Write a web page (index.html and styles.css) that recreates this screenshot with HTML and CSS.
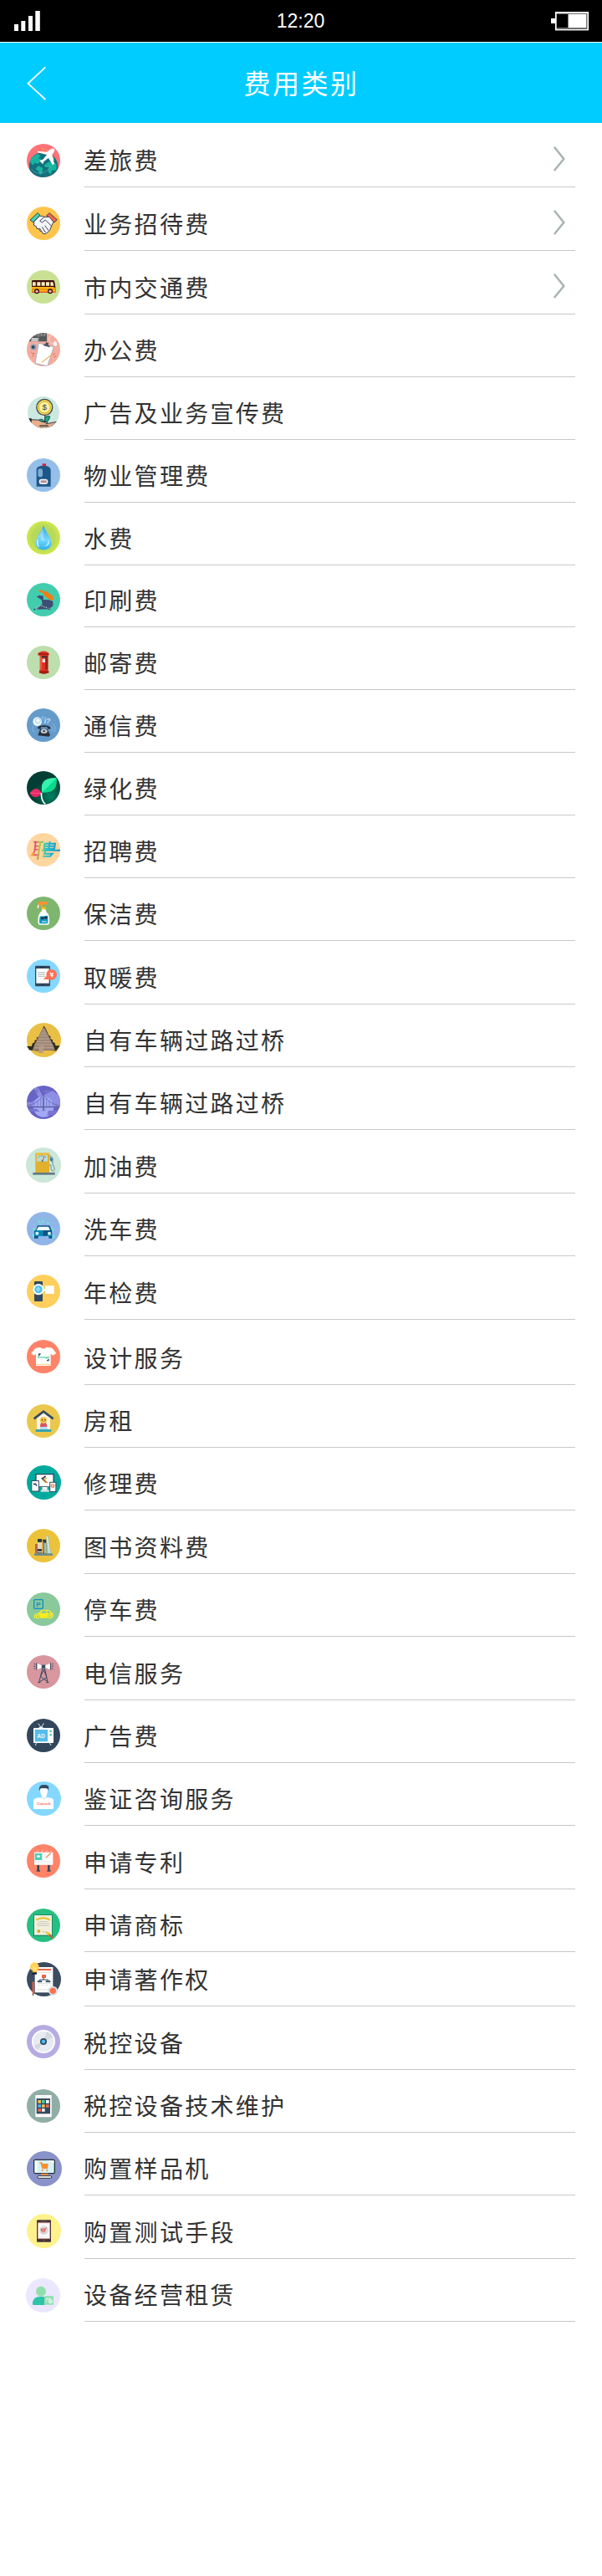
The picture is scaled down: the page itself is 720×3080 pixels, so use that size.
FILE: index.html
```html
<!DOCTYPE html>
<html lang="zh-CN">
<head>
<meta charset="utf-8">
<title>费用类别</title>
<link rel="stylesheet" href="styles.css">
</head>
<body>
<div class="status">
  <svg class="signal" width="32" height="26" viewBox="0 0 32 26"><path fill="#fff" d="M0 17h5v8H0zM8.300 13h5v12h-5zM17 7h5v18h-5zM25.300 1h5.500v24h-5.500z"/></svg>
  <span class="time">12:20</span>
  <svg class="battery" width="46" height="23" viewBox="0 0 46 23"><path fill="#fff" d="M0 8h5v6H0z"/><rect x="5.800" y="1" width="38.400" height="20.500" fill="#000" stroke="#fff" stroke-width="1.800"/><path stroke="#777" d="M7 19.500h36M42.500 2v18M7 2.500h36"/><path fill="#fff" d="M20.500 3H42v16H20.500z"/></svg>
</div>
<header class="header">
  <svg class="back" width="24" height="42" viewBox="0 0 24 42"><path d="M22.300 1.300 1.500 20.800 22.300 40" fill="none" stroke="#fff" stroke-width="1.800"/></svg>
  <h1 class="title">费用类别</h1>
</header>
<ul class="list">
<li class="row h77 b11"><svg class="icon" viewBox="0 0 120 120"><circle cx="60" cy="60" r="60" fill="#ff7378"/><path fill="#13717f" d="M10 92C2 60 26 30 60 31s57 29 51 60c-23 39-80 38-101 1z"/><path fill="#17b5a0" d="M18 49l22-14 10 8-9 9 12 5-13 15-11-4-8 9-9-13zM42 78l15 9-2 17-8 7-4-13-12-8zM63 75l20-12 23 8 1 23-17 1-4 15-10-12 4-14-15-1zM71 48l14-7 16 16-14 5z"/><path fill="none" stroke="#8fd5d0" stroke-width="2" stroke-dasharray="4 3" d="M17 92q40 36 79-25"/><path fill="#f7bd35" d="M54 18l7-1-2 8zM68 23l5-2 1 6zM91 49l7-2-4 8zM87 61l7-2-3 8z"/><path fill="#fff" d="M98 17c5 4-1 15-7 21l8 33-6 5-15-26-17 14-3 9-5-5-7-7 3-2 9-3 14-17-33-8 1-5 33 3c8-9 19-15 25-12z"/></svg><span class="label">差旅费</span><svg class="arrow" viewBox="0 0 14 30"><path d="M1.500 1.500 12.300 15 1.500 28.300"/></svg></li>
<li class="row h76"><svg class="icon" viewBox="0 0 120 120"><circle cx="60" cy="60" r="60" fill="#ffc44c"/><g stroke="#3a4353" stroke-width="3" stroke-linejoin="round"><path fill="#3dd6b2" d="M39 23l9 8-25 25-11-8z"/><path fill="#fa6244" d="M81 23l-10 9 28 25 10-10z"/><path fill="#f4f5f9" d="M26 54l20-20h9l8 3h18l15 18-8 16-5 14-8 7-8 6-9-1-4-8-6-1-4-8-8-1-2-8-9-4z"/><path fill="none" d="M64 37L47 51l8 6 12-9 23 23M65 68l13 18M55 73l13 21M45 77l7 9"/></g></svg><span class="label">业务招待费</span><svg class="arrow" viewBox="0 0 14 30"><path d="M1.500 1.500 12.300 15 1.500 28.300"/></svg></li>
<li class="row h76"><svg class="icon" viewBox="0 0 120 120"><circle cx="60" cy="60" r="60" fill="#cae194"/><path fill="#3b0a0c" d="M18 38q2-2 5-2h71q5 0 6 7l3 19v17H19z"/><path fill="#fbb610" d="M18 60h78l6 4v15H19z"/><path fill="#ec8b09" d="M18 67h82v4H18z"/><path fill="#e84a33" d="M18 77h85v4H18z"/><path fill="#fff2bf" d="M21 43h11v13H21zM37 43h12v13H37zM53 43h12v13H53zM69 43h12v13H69zM85 43h9l3 13H85z"/><circle cx="36" cy="76" r="9" fill="#2d1416"/><circle cx="84" cy="76" r="9" fill="#2d1416"/><circle cx="36" cy="76" r="5" fill="#ffb3a0"/><circle cx="84" cy="76" r="5" fill="#ffb3a0"/></svg><span class="label">市内交通费</span><svg class="arrow" viewBox="0 0 14 30"><path d="M1.500 1.500 12.300 15 1.500 28.300"/></svg></li>
<li class="row h75"><svg class="icon" viewBox="0 0 120 120"><clipPath id="office"><circle cx="60" cy="60" r="60"/></clipPath><g clip-path="url(#office)"><path fill="#f4ac9e" d="M0 0h120v120H0z"/><path fill="#55585a" d="M0 0h72v31H0z"/><path fill="#c5c5c5" d="M18 18h23v13H15z"/><path stroke="#a1a1a1" stroke-width="2" d="M12 4h56M14 10h54M42 0v31M53 0v12M65 0v12"/><path fill="none" stroke="#fadad4" stroke-width="3" d="M93 7q-22 9-10 25t22-2"/><path fill="#f9f7f8" d="M96 34l5-4 6 3 2 11-6 4-7-4z"/><circle cx="24" cy="51" r="11" fill="#8aa8bc"/><circle cx="23" cy="51" r="6" fill="#37475d"/><path fill="#fff" stroke="#87a0c1" stroke-width="2" d="M43 37l54 13-23 69-44-10z"/><path fill="#4c5260" d="M65 41l5-7 8 2-1 8 6 3-1 5-23-7 1-4z"/><path stroke="#f0ba6b" stroke-width="4" d="M54 106l34-27"/><path fill="none" stroke="#e1725f" stroke-width="3" d="M15 68l5 6 6-2-5 14M93 80l9-7M104 81l-5 8"/></g></svg><span class="label">办公费</span></li>
<li class="row h75 b13"><svg class="icon i38" viewBox="0 0 120 120"><clipPath id="grow"><circle cx="60" cy="60" r="60"/></clipPath><g clip-path="url(#grow)"><path fill="#cbe8e1" d="M0 0h120v120H0z"/><path fill="#e8ad8c" stroke="#293b43" stroke-width="3" d="M4 87l38 2 18 8h16l-7 7 43-9-25 20-24 7-58-12z"/><path fill="#1d2d36" d="M4 82l11 1v17H5z"/><path stroke="#1d2d36" stroke-width="4" fill="none" d="M45 111h33M62 98c8-6 3-19 4-28"/><path fill="#24a984" stroke="#194846" stroke-width="3" d="M43 89q13-8 20 5-12 5-20-5zM65 85q3-14 19-10-2 20-17 22z"/><circle cx="64" cy="41" r="30" fill="#fbdf59" stroke="#39454a" stroke-width="4"/><circle cx="64" cy="41" r="22" fill="#fff198" stroke="#c89e28" stroke-width="3"/></g><text x="64" y="52" text-anchor="middle" font-size="31" fill="#384248">$</text></svg><span class="label">广告及业务宣传费</span></li>
<li class="row h75"><svg class="icon" viewBox="0 0 120 120"><circle cx="60" cy="60" r="60" fill="#95bfe8"/><path fill="#1d5787" d="M35 101V39q1-9 16-12h19q15 3 16 15v59z"/><path fill="#d9213c" d="M56 19h13v9H56z"/><rect x="40" y="37" width="17" height="30" rx="8" fill="#7bacd7"/><rect x="44" y="74" width="32" height="19" rx="9" fill="#f5f3f6"/><path fill="#af909b" d="M50 79h21v9H50z"/></svg><span class="label">物业管理费</span></li>
<li class="row h75"><svg class="icon" viewBox="0 0 120 120"><defs><radialGradient id="lime"><stop offset=".65" stop-color="#b7d95b"/><stop offset="1" stop-color="#d0e84c"/></radialGradient><linearGradient id="drop" x2="0" y2="1"><stop offset="0" stop-color="#2fa5e2"/><stop offset=".6" stop-color="#74d6fb"/><stop offset="1" stop-color="#2bb0e9"/></linearGradient></defs><circle cx="60" cy="60" r="60" fill="url(#lime)"/><path fill="url(#drop)" d="M60 14c4 19 29 44 29 65 0 33-57 33-57 0 0-21 25-48 28-65z"/><path fill="#fff" opacity=".75" d="M38 62c-5 22 0 29 7 33-4-12-3-18-7-33zM77 65c1 17-6 23-16 25 15 1 24-8 16-25z"/><path fill="#effdff" opacity=".35" d="M57 25q-14 27-18 39l10-9q-1 17 14 16z"/></svg><span class="label">水费</span></li>
<li class="row h74"><svg class="icon" viewBox="0 0 120 120"><circle cx="60" cy="60" r="60" fill="#43cdae"/><path fill="#f47b13" d="M39 25l17 1 7 7 3-6 28 20 2 16-14-3-19-15-6-10-7-1z"/><path fill="#3e4d75" d="M35 49l11-5 14 3-1 13 22 1 13 5v16L80 94l-43 1 19-20-3-14z"/><path fill="none" stroke="#30405f" stroke-width="5" stroke-dasharray="5 3" d="M26 96l23-14 36 14"/><path fill="none" stroke="#bed7db" stroke-width="4" stroke-dasharray="4 4" d="M32 91l17-10 29 10"/></svg><span class="label">印刷费</span></li>
<li class="row h75"><svg class="icon" viewBox="0 0 120 120"><circle cx="60" cy="60" r="60" fill="#bddead"/><path fill="#de3321" d="M41 26q20-13 38 0v9h-3v50l3 12q-19 7-35 0l3-12V35h-6z"/><path fill="#a21d16" d="M41 28h38v5H41zM45 91h34v6q-18 8-34 0zM67 36h9v50h-9z"/><path fill="#35333d" d="M53 37h17v6H53z"/><path fill="#eee4df" d="M56 47h10v13H56z"/><path fill="#fb694d" d="M49 38h4v48h-4z"/></svg><span class="label">邮寄费</span></li>
<li class="row h75"><svg class="icon" viewBox="0 0 120 120"><circle cx="60" cy="60" r="60" fill="#659bcb"/><circle cx="38" cy="47" r="16" fill="#eef8ff"/><circle cx="40" cy="44" r="9" fill="none" stroke="#a0cce9" stroke-width="3"/><circle cx="58" cy="34" r="5" fill="none" stroke="#8dc6ec" stroke-width="3"/><text x="62" y="54" font-size="26" font-weight="bold" font-style="italic" fill="#c9e8fd">i?</text><path fill="none" stroke="#86b8df" stroke-width="3" d="M25 62q-10 12 3 25M94 54q15 15 3 31M88 62q9 11 2 20"/><path fill="#29313b" d="M39 73c-4-16 48-16 47 0l-10 1-3-7H51l-1 7zM48 74h26l10 22-5 5-39-4z"/><ellipse cx="62" cy="82" rx="12" ry="8" fill="#c9ced2"/><ellipse cx="62" cy="82" rx="5" ry="3" fill="#35414e"/></svg><span class="label">通信费</span></li>
<li class="row h75"><svg class="icon" viewBox="0 0 120 120"><defs><radialGradient id="forest" cx=".7" cy=".75"><stop stop-color="#008061"/><stop offset="1" stop-color="#033e34"/></radialGradient></defs><circle cx="60" cy="60" r="60" fill="url(#forest)"/><path fill="#08d98d" d="M107 25c3 29-4 54-52 52C48 38 66 23 107 25z"/><path fill="#34f3ac" d="M107 25L55 77C48 38 66 23 107 25z"/><path fill="#e92865" d="M11 79c15-21 31-21 42 0-13 20-31 19-42 0z"/><path stroke="#ff6893" stroke-width="2" d="M12 79h40"/><path fill="none" stroke="#fff" stroke-width="5" d="M52 78q0 30 15 40"/></svg><span class="label">绿化费</span></li>
<li class="row h75 b13"><svg class="icon" viewBox="0 0 120 120"><defs><linearGradient id="rainbow" gradientUnits="userSpaceOnUse" x1="20" x2="120"><stop stop-color="#ffa323"/><stop offset=".12" stop-color="#e0439c"/><stop offset=".25" stop-color="#bec933"/><stop offset=".5" stop-color="#25c4cf"/><stop offset="1" stop-color="#168bc9"/></linearGradient></defs><circle cx="60" cy="60" r="60" fill="#ffd5a0"/><path fill="none" stroke="url(#rainbow)" stroke-width="6" d="M24 32h36M32 34l-5 34-8 11h27M49 34L39 96M31 47h14M29 59h14M64 38h38l-3 18H62zM83 30l-4 26M63 47h38M54 62h66M68 62l-5 12h29l-8 9H57"/></svg><span class="label">招聘费</span></li>
<li class="row h75"><svg class="icon" viewBox="0 0 120 120"><circle cx="60" cy="60" r="60" fill="#7eb66f"/><path fill="#fb9330" d="M41 19l29-1q8 6 4 11l-16-1-2 15-5-1-1-13-8-1-1 10-6 1z"/><path fill="#fff" d="M40 29l4 1-2 12-4 1zM54 43h13q0 10 11 21 8 35-2 37H45q-8-3-3-32 4-13 12-17z"/><path fill="#fbbf1e" d="M54 38h14v8H54z"/><path fill="#0c99c4" d="M47 71l28-3q3 24-1 29H47q-4-3 0-26z"/><path fill="#28303d" d="M50 73l12 2 7-4 6 1-4 10-4-3-9 1-5 3z"/><path stroke="#e8faff" stroke-width="3" d="M54 90h17"/></svg><span class="label">保洁费</span></li>
<li class="row h76 b13"><svg class="icon" viewBox="0 0 120 120"><circle cx="60" cy="60" r="60" fill="#84d8ff"/><rect x="30" y="23" width="54" height="74" rx="4" fill="#34475e"/><path fill="#fff" d="M34 33h46v53H34z"/><path stroke="#233346" stroke-width="3" d="M48 28h18M52 91h9"/><path stroke="#98a2a9" stroke-width="4" stroke-dasharray="3 2" d="M42 47h23M42 54h23M42 61h25"/><path fill="#ff7057" d="M72 59l-13 12 20 2z"/><circle cx="89" cy="55" r="19" fill="#ff7057"/><path fill="none" stroke="#fff" stroke-width="4" d="M84 48l6 8 5-8M90 56v9M85 58h10"/></svg><span class="label">取暖费</span></li>
<li class="row h75 b11"><svg class="icon i41" viewBox="0 0 120 120"><circle cx="60" cy="60" r="60" fill="#e9bf45"/><path fill="#302c22" d="M60 10l7 11 10 22 7 6-2 6 9 5-1 6 8 4 3 10 15 0-13 18-28-2-38 2-28-3L0 81l17 1 3-10 8-4-1-6 9-4-2-6 8-4z"/><path fill="#9e8776" d="M57 17h5l31 62 6 17H20l7-20z"/><path stroke="#c8b3a0" stroke-width="2" d="M55 26h8M50 36h18M46 45h26M42 56h35M36 66h47M30 76h60M26 87h68"/><path fill="#b69a84" d="M44 80h18l-5 25H41z"/></svg><span class="label">自有车辆过路过桥</span></li>
<li class="row h75"><svg class="icon" viewBox="0 0 120 120"><clipPath id="bay"><circle cx="60" cy="60" r="60"/></clipPath><g clip-path="url(#bay)"><path fill="#6864c6" d="M0 0h120v120H0z"/><path fill="#8e8fe4" d="M0 59h20L42 41 21 0h15l20 35 38-16 12 10 14-3v52H0z"/><circle cx="60" cy="76" r="37" fill="#a2a8f5"/><path fill="#7875d2" d="M0 83h34l13 10H0zM78 90h42v16H73zM30 23l7-16 7 19zM57 18h38l-26 8z"/><path fill="none" stroke="#595a9f" stroke-width="2" d="M0 76h120M0 72Q40 66 60 33q20 32 60 40M60 31v58M54 89h13"/><path stroke="#5d5da0" stroke-width="4" d="M0 77h120M60 42v45"/><path stroke="#6a69b2" stroke-width="2" d="M15 69v7M27 62v14M39 53v23M50 44v32M71 45v31M81 54v22M93 62v14M106 68v8"/></g></svg><span class="label">自有车辆过路过桥</span></li>
<li class="row h76"><svg class="icon i42 left" viewBox="0 0 126 126"><circle cx="63" cy="63" r="63" fill="#cbe7da"/><path fill="#627a88" d="M25 90h79v8H25z"/><path fill="#e1b02d" d="M34 20h50v70H34z"/><path fill="#edbd38" d="M34 20h50v7H34z"/><path fill="#b4ddd9" d="M39 28h39v22H39z"/><path fill="none" stroke="#4f5d62" stroke-width="3" stroke-dasharray="3 4" d="M43 37q14-13 31 0"/><path stroke="#e84a3d" stroke-width="3" d="M58 49l8-17"/><circle cx="59" cy="49" r="3" fill="#476773"/><path fill="none" stroke="#708996" stroke-width="3" d="M84 63h6v13q2 10 8 9 8-3 2-17-7-10-4-20V37L83 27"/><path fill="#397fa3" d="M86 32l11 10-4 10-7-6z"/></svg><span class="label">加油费</span></li>
<li class="row h75"><svg class="icon" viewBox="0 0 120 120"><circle cx="60" cy="60" r="60" fill="#91b5e8"/><path stroke="#7ac6df" stroke-width="4" d="M27 24h64"/><g fill="#79dcdf"><circle cx="43" cy="35" r="4"/><circle cx="58" cy="34" r="5"/><circle cx="76" cy="40" r="5"/><circle cx="48" cy="43" r="4"/><circle cx="27" cy="45" r="3"/><circle cx="28" cy="65" r="7"/><circle cx="90" cy="63" r="7"/><circle cx="93" cy="88" r="8"/><circle cx="25" cy="85" r="6"/></g><path fill="#095585" d="M39 49h42l9 17 1 29H79v-8H41v8H27V68l7-5z"/><path fill="#0986b5" d="M34 66h25v21H28V73zM61 87h30v-9z"/><path fill="#f1fbff" d="M42 53h36l6 13H35z"/><circle cx="37" cy="77" r="6" fill="#d9f4fa"/><circle cx="81" cy="77" r="6" fill="#d9f4fa"/></svg><span class="label">洗车费</span></li>
<li class="row h76 b13"><svg class="icon" viewBox="0 0 120 120"><circle cx="60" cy="60" r="60" fill="#ffcf5d"/><rect x="27" y="24" width="30" height="72" rx="3" fill="#34495e"/><path fill="#fff" d="M66 40h32v29H66v-9l-7-6 7-4z"/><circle cx="42" cy="53" r="20" fill="#fff"/><circle cx="42" cy="53" r="14" fill="#4dc1f0"/><path fill="#91daf4" d="M32 52l9-9 9 9-9 10z"/></svg><span class="label">年检费</span></li>
<li class="row h78 b13"><svg class="icon" viewBox="0 0 120 120"><circle cx="60" cy="60" r="60" fill="#ff8368"/><path fill="#fff" d="M16 48l16-19 17-2q10 10 22-1l20 3 15 19-12 8-8-6v43H33V51l-8 5z"/><path stroke="#f7d581" stroke-width="3" d="M16 48l9 8M94 56l11-8M34 88h52"/><path fill="none" stroke="#35465a" stroke-width="4" d="M44 57v-6h6M72 74h6v-6"/><text x="60" y="65" text-anchor="middle" font-size="13" font-weight="bold" fill="#26c39e">Design</text></svg><span class="label">设计服务</span></li>
<li class="row h75 b11"><svg class="icon" viewBox="0 0 120 120"><circle cx="60" cy="60" r="60" fill="#eac84e"/><path fill="#f7f3e7" d="M60 29l24 18v44H36V48z"/><path fill="none" stroke="#35495d" stroke-width="8" d="M26 52l34-26 35 26"/><path fill="#37a5ad" d="M32 90h56v9H32z"/><path fill="#b9ddf1" d="M47 81h27v9H47z"/><path fill="#de5264" d="M48 81q0-15 7-17l10 0q7 4 8 17z"/><circle cx="60" cy="57" r="12" fill="#f2c345"/><circle cx="55" cy="56" r="2"/><circle cx="66" cy="56" r="2"/><path fill="#e56549" d="M57 59h7l-4 5z"/></svg><span class="label">房租</span></li>
<li class="row h75"><svg class="icon i41" viewBox="0 0 120 120"><circle cx="60" cy="60" r="60" fill="#00a99d"/><path fill="#fff" stroke="#254658" stroke-width="4" d="M32 31h62v43H32z"/><path fill="#f5f5f5" d="M34 67h58v7H34zM54 76h18v11H54z"/><path fill="#d8dee2" d="M49 86h29v7H49z"/><g fill="#fff" stroke="#394964" stroke-width="3"><path d="M17 54h25v37H17zM81 59h21v33H81z"/></g><path stroke="#2b394a" stroke-width="5" d="M52 44l17 16M66 38l-9 7"/><path stroke="#eba320" stroke-width="4" d="M69 43L57 56M65 54l8 8"/><path fill="none" stroke="#273649" stroke-width="4" d="M23 66l8-1 4 7"/><circle cx="91" cy="72" r="5" fill="#fff" stroke="#ef744a" stroke-width="4"/></svg><span class="label">修理费</span></li>
<li class="row h76 b13"><svg class="icon" viewBox="0 0 120 120"><circle cx="60" cy="60" r="60" fill="#edc23b"/><path fill="#698d92" d="M27 88h66v8H27z"/><path fill="#ba6256" d="M30 54h11v34H30z"/><path fill="#2b3c4d" d="M39 36h15v52H39zM57 38h13v50H57z"/><path fill="#e2d9b0" d="M39 48h15v24H39zM39 80h15v5H39z"/><path fill="#c9674d" d="M57 46h5v39h-5z"/><path fill="#8cc4d0" d="M62 50h8v37h-8zM70 26l7-2 10 63-13 1z"/><path stroke="#eef1e7" stroke-width="4" d="M73 27l8 60"/></svg><span class="label">图书资料费</span></li>
<li class="row h75"><svg class="icon" viewBox="0 0 120 120"><circle cx="60" cy="60" r="60" fill="#89c99b"/><rect x="26" y="26" width="32" height="32" rx="3" fill="none" stroke="#168cc3" stroke-width="4"/><text x="42" y="50" text-anchor="middle" font-size="24" font-weight="bold" fill="#168cc3">P</text><path fill="#fbec20" d="M26 90l2-12 14-4 10-10q17-3 30 0l12 12 2 11-5 5H29z"/><path fill="#89c99b" d="M51 72l7-6h12v8H48zM73 67h7l6 8H74z"/><g fill="#fbec20" stroke="#89c99b" stroke-width="2"><circle cx="39" cy="87" r="8"/><circle cx="83" cy="87" r="8"/></g><circle cx="39" cy="87" r="3" fill="#89c99b"/><circle cx="83" cy="87" r="3" fill="#89c99b"/></svg><span class="label">停车费</span></li>
<li class="row h76 b13"><svg class="icon" viewBox="0 0 120 120"><circle cx="60" cy="60" r="60" fill="#d8969e"/><path fill="#34495e" d="M53 35h14v11H53z"/><path fill="#fff" d="M53 36v9l-15 7V30zM67 36v9l16 7V30z"/><path fill="none" stroke="#34495e" stroke-width="3" d="M57 46L44 98M64 46l11 52M59 48l13 32-25 15M63 51L49 76l23 17M40 98h9M70 98h9M35 28v25M86 28v25M31 34l-5-4M30 40h-6M31 46l-5 4M90 34l5-4M91 40h5M90 46l5 4"/></svg><span class="label">电信服务</span></li>
<li class="row h75"><svg class="icon" viewBox="0 0 120 120"><circle cx="60" cy="60" r="60" fill="#32465c"/><path stroke="#dbe8ef" stroke-width="3" d="M41 17l11 15M61 16l-9 16M35 86l-4 10M82 86l5 10"/><path fill="#dceff5" d="M41 34q10-12 20 0z"/><rect x="24" y="33" width="72" height="54" rx="3" fill="#fff"/><path fill="#56bdea" d="M29 39h46v43H29z"/><text x="51" y="68" text-anchor="middle" font-size="20" font-weight="bold" fill="#e9faff">AD</text><circle cx="86" cy="45" r="4" fill="#46d0ad"/><circle cx="86" cy="58" r="4" fill="#46d0ad"/></svg><span class="label">广告费</span></li>
<li class="row h75 b11"><svg class="icon i41" viewBox="0 0 123 123"><circle cx="61.500" cy="61.500" r="61.500" fill="#84d8ff"/><path fill="#e9f2fa" d="M53 47h18v14H53z"/><path fill="#fff" d="M24 96V69q2-11 25-11l13 5 12-5q20 0 22 10v28q-1 3-4 3H27q-3 0-3-3zM47 28q15-10 29 0-2 27-14 28-13-3-15-28z"/><path fill="#34495e" d="M45 34q-3-18 10-21 18-3 24 5l-2 16-3-9-24-1z"/><text x="61" y="84" text-anchor="middle" font-size="13" font-weight="bold" fill="#ff604b">Consult</text></svg><span class="label">鉴证咨询服务</span></li>
<li class="row h76 b13"><svg class="icon" viewBox="0 0 120 120"><circle cx="60" cy="60" r="60" fill="#ff8368"/><path fill="#34495e" d="M37 74h8v20h3v4H35v-4h2zM75 74h8v20h3v4H73v-4h2z"/><path fill="#fff" d="M27 29h67v42q0 3-3 3H30q-3 0-3-3z"/><path fill="#4acfb8" d="M29 33h26v24H29z"/><path fill="#fff" d="M35 43q6-6 14 0-4 7-9 5z"/><path stroke="#dfe4e5" stroke-width="2" d="M60 36h27M60 42h25M60 50h30M30 61h60M30 67h60"/><path stroke="#ef9a55" stroke-width="4" d="M69 49l18-18"/><path fill="none" stroke="#ffd3c3" stroke-width="3" d="M34 28l8-5M51 28l8-5M67 28l8-5M84 28l6-5"/></svg><span class="label">申请专利</span></li>
<li class="row h75 b11"><svg class="icon" viewBox="0 0 120 120"><circle cx="60" cy="60" r="60" fill="#29bf83"/><path fill="#168d68" d="M24 21h69v78H24z"/><path fill="#f1efdc" d="M27 24h63v71H27z"/><path fill="none" stroke="#eac126" stroke-width="6" d="M34 41q26-14 49 0"/><path fill="none" stroke="#c9cbb9" stroke-width="3" d="M43 47h31M36 54h45M38 61h42M55 81l8 4 9-3"/><circle cx="43" cy="81" r="6" fill="#d3ad1d"/><path fill="#f0ba25" d="M68 82l14 5 5 8-6 3-10-9z"/><path stroke="#b4643a" stroke-width="7" d="M82 94l11 13"/></svg><span class="label">申请商标</span></li>
<li class="row h65 b11"><svg class="icon i41" viewBox="0 0 123 123"><circle cx="61.500" cy="61.500" r="61.500" fill="#3b4b60"/><path fill="#fff" d="M29 18h65v91H29z"/><path fill="#ec6541" d="M38 24h49v6H38zM54 45h15v12H54z"/><path stroke="#dcdde0" stroke-width="3" d="M35 37h54M39 76h49M35 99h50M38 83h8M53 83h8M68 83h8M83 83h6"/><path fill="none" stroke="#34495e" stroke-width="3" d="M60 56v7M46 63h31v4M46 63v4M39 68h15v3H39zM69 68h15v3H69z"/><circle cx="28" cy="17" r="16" fill="#ffd159"/><path fill="#f9b31b" d="M21 31h14v8H21z"/><path fill="none" stroke="#fff4a3" stroke-width="3" d="M24 18l2 15M33 18l-2 15"/><path fill="#111e2c" d="M20 37h16v7H20z"/><path fill="#f25f3b" d="M20 70h6v45h-6z"/><path fill="#1b222c" d="M21 113h4l-2 10z"/><circle cx="94" cy="103" r="17" fill="#d5dce1"/><circle cx="94" cy="103" r="11" fill="#ff714c"/></svg><span class="label">申请著作权</span></li>
<li class="row h76 b13"><svg class="icon" viewBox="0 0 120 120"><circle cx="60" cy="60" r="60" fill="#b7abe4"/><circle cx="60" cy="60" r="42" fill="#fff"/><circle cx="60" cy="60" r="37" fill="#e7ebf1"/><path fill="#d1d8e2" d="M60 60l11-35q18 5 23 20zM60 60L39 91q-9-6-13-17z"/><circle cx="60" cy="60" r="12" fill="#34495e"/><circle cx="60" cy="60" r="7" fill="#4dbdec"/></svg><span class="label">税控设备</span></li>
<li class="row h75 b11"><svg class="icon" viewBox="0 0 120 120"><circle cx="60" cy="60" r="60" fill="#90aea6"/><rect x="31" y="21" width="58" height="79" rx="3" fill="#fff"/><path fill="#34495e" d="M35 33h49v55H35z"/><path stroke="#d0d6dc" stroke-width="2" d="M52 27h17M57 93h7"/><path fill="#f2c349" d="M40 39h11v11H40zM54 55h11v10H54z"/><path fill="#46cfb0" d="M54 39h11v11H54z"/><path fill="#fff" d="M69 39h11v11H69zM54 70h11v10H54z"/><path fill="#59bdf0" d="M40 55h11v10H40z"/><path fill="#f26b55" d="M69 55h11v10H69zM40 70h11v10H40z"/></svg><span class="label">税控设备技术维护</span></li>
<li class="row h75 b10"><svg class="icon i42" viewBox="0 0 126 126"><circle cx="63" cy="63" r="63" fill="#8993c9"/><rect x="26" y="31" width="74" height="49" rx="5" fill="#d4f3f8" stroke="#2d3036" stroke-width="4"/><path fill="#fff" d="M29 34h8v43h-8zM68 34h29v9z"/><path fill="#f98e2e" d="M46 40h8l3 5h20l-2 18-20 1-5-20h-4zM52 80h24v6H52z"/><circle cx="56" cy="69" r="3" fill="#ef8427"/><circle cx="73" cy="69" r="3" fill="#ef8427"/><rect x="38" y="89" width="51" height="8" rx="4" fill="#fff" stroke="#34363c" stroke-width="3"/></svg><span class="label">购置样品机</span></li>
<li class="row h76"><svg class="icon i41" viewBox="0 0 123 123"><circle cx="61.500" cy="61.500" r="61.500" fill="#fff28c"/><rect x="36" y="22" width="51" height="79" rx="3" fill="#413437"/><path fill="#fff" stroke="#eb8a82" stroke-width="2" d="M40 32h43v57H40z"/><path stroke="#796d70" stroke-width="2" d="M51 27h20"/><circle cx="61" cy="95" r="2" fill="#ff4c3b"/><circle cx="62" cy="59" r="17" fill="#dddfe1"/><path fill="none" stroke="#df584a" stroke-width="3" d="M72 50l-5 3-2 11H54l-3-10h15M54 58h12M56 69h1M65 69h1"/><path stroke="#dfe2e3" stroke-width="2" d="M44 82h34"/></svg><span class="label">购置测试手段</span></li>
<li class="row h75 b10"><svg class="icon i41 left" viewBox="0 0 123 123"><circle cx="61.500" cy="61.500" r="61.500" fill="#eae7ff"/><circle cx="54" cy="47" r="18" fill="#92dfac"/><path fill="#2dc4a9" d="M24 94V86q4-19 25-20h18v30H27q-3 0-3-2z"/><rect x="67" y="64" width="32" height="31" rx="3" fill="#92dfac"/><path fill="none" stroke="#daf8e3" stroke-width="3" d="M74 87V72M74 73h10M81 77q4-8 10-2"/><circle cx="88" cy="83" r="6" fill="#b8e6dc" stroke="#fff" stroke-width="3"/></svg><span class="label">设备经营租赁</span></li>
</ul>
</body>
</html>
```
FILE: styles.css
```css
* { box-sizing: border-box; }
body {
  margin: 0;
  background: #fff;
  color: #333;
  font-family: "Noto Sans CJK SC", sans-serif;
}
svg { display: block; flex: none; }
.status {
  height: 51px;
  padding: 0 15px 0 17px;
  display: grid;
  grid-template-columns: 1fr auto 1fr;
  align-items: center;
  background: #000;
  border-bottom: 1px solid #fff;
}
.time {
  padding-right: 3px;
  color: #fff;
  font: 23px/50px "Liberation Sans", Arial, sans-serif;
}
.battery { justify-self: end; }
.header {
  height: 96px;
  padding: 0 32px;
  display: grid;
  grid-template-columns: 1fr auto 1fr;
  align-items: center;
  background: #0cf;
}
.back { margin-top: 2px; }
.title {
  margin: 0;
  padding: 0 0 2px 1px;
  color: #fff;
  font-size: 32px;
  font-weight: 400;
  letter-spacing: 2.5px;
  line-height: 94px;
}
.list { margin: 0; padding: 0; list-style: none; }
.row {
  display: grid;
  grid-template-columns: 68px 1fr 26px;
  align-items: end;
  margin: 0 32px;
  padding-bottom: 1px;
  background: linear-gradient(#c8c8c8, #c8c8c8) right bottom / 587px 1px no-repeat;
}
.icon {
  width: 40px;
  height: 40px;
  margin-bottom: 12px;
  font-family: "Liberation Sans", Arial, sans-serif;
}
.i38 { width: 38px; height: 38px; margin-left: 1px; }
.i41 { width: 41px; height: 41px; }
.i42 { width: 42px; height: 42px; }
.left { margin-left: -1px; }
.b10 .icon { margin-bottom: 10px; }
.b11 .icon { margin-bottom: 11px; }
.b13 .icon { margin-bottom: 13px; }
.label {
  font-size: 28px;
  font-weight: 400;
  letter-spacing: 2.3px;
  line-height: 40px;
  margin-bottom: 12px;
  white-space: nowrap;
}
.arrow {
  width: 14px;
  height: 30px;
  margin-bottom: 18px;
  fill: none;
  stroke: #aab3b4;
  stroke-width: 2.5;
  stroke-linecap: round;
}
.h65 { height: 65px; }
.h74 { height: 74px; }
.h75 { height: 75px; }
.h76 { height: 76px; }
.h77 { height: 77px; }
.h78 { height: 78px; }
```
